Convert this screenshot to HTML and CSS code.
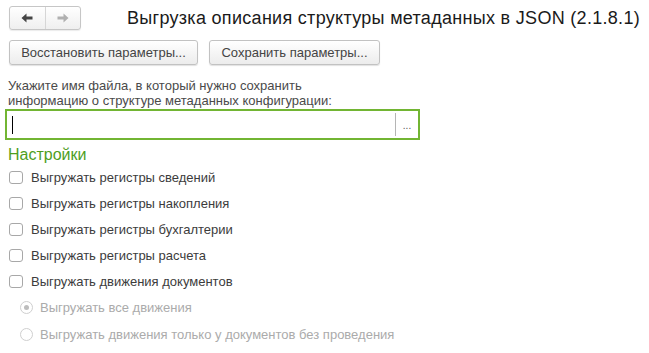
FILE: index.html
```html
<!DOCTYPE html>
<html lang="ru">
<head>
    <meta charset="UTF-8">
    <title>Выгрузка описания структуры метаданных в JSON</title>
    <link rel="stylesheet" href="styles.css">
</head>
<body>
    <div class="form">
        <div class="header">
            <div class="nav">
                <span class="nav-btn">
                    <svg width="12" height="10" viewBox="0 0 12 10"><path d="M0.5 5 L5.5 0.5 V3.5 H11.5 V6.5 H5.5 V9.5 Z" fill="#454545"/></svg>
                </span>
                <span class="nav-btn">
                    <svg width="12" height="10" viewBox="0 0 12 10"><path d="M11.5 5 L6.5 0.5 V3.5 H0.5 V6.5 H6.5 V9.5 Z" fill="#b0b0b0"/></svg>
                </span>
            </div>
            <h1 class="title">Выгрузка описания структуры метаданных в JSON (2.1.8.1)</h1>
        </div>

        <div class="actions">
            <button class="btn btn-restore">Восстановить параметры...</button>
            <button class="btn btn-save">Сохранить параметры...</button>
        </div>

        <div class="file-label">Укажите имя файла, в который нужно сохранить<br>информацию о структуре метаданных конфигурации:</div>
        <div class="file-field">
            <span class="file-input"><span class="caret"></span></span>
            <span class="file-choose">...</span>
        </div>

        <div class="group-title">Настройки</div>
        <div class="options">
            <label class="check"><span class="box"></span>Выгружать регистры сведений</label>
            <label class="check"><span class="box"></span>Выгружать регистры накопления</label>
            <label class="check"><span class="box"></span>Выгружать регистры бухгалтерии</label>
            <label class="check"><span class="box"></span>Выгружать регистры расчета</label>
            <label class="check"><span class="box"></span>Выгружать движения документов</label>
            <label class="radio disabled"><span class="dot checked"></span>Выгружать все движения</label>
            <label class="radio disabled"><span class="dot"></span>Выгружать движения только у документов без проведения</label>
        </div>
    </div>
</body>
</html>
```

FILE: styles.css
```css
body {
    margin: 0;
    background-color: #ffffff;
    color: #333333;
    font-family: 'Liberation Sans', Arial, sans-serif;
    font-size: 13px;
}

.form {
    padding-top: 6px;
}

.header {
    display: flex;
    align-items: center;
    height: 24px;
}

.nav {
    display: flex;
    margin-left: 9px;
    width: 72px;
    height: 24px;
    box-sizing: border-box;
    border: 1px solid #c6c6c6;
    border-radius: 3px;
    background: linear-gradient(#ffffff, #efefef);
    box-shadow: 0 1px 1px rgba(0, 0, 0, 0.08);
}

.nav-btn {
    flex: 1;
    display: flex;
    align-items: center;
    justify-content: center;
}

.nav-btn + .nav-btn {
    border-left: 1px solid #d6d6d6;
}

.title {
    margin: 1px 0 0 46px;
    font-size: 18px;
    font-weight: normal;
    letter-spacing: 0.3px;
    color: #1a1a1a;
    white-space: nowrap;
}

.actions {
    display: flex;
    gap: 11px;
    margin: 10px 0 0 9px;
}

.btn {
    height: 25px;
    box-sizing: border-box;
    border: 1px solid #c2c2c2;
    border-radius: 3px;
    background: linear-gradient(#ffffff, #ececec);
    box-shadow: 0 1px 1px rgba(0, 0, 0, 0.12);
    font-family: inherit;
    font-size: 13px;
    color: #444444;
    padding: 0;
}

.btn-restore {
    width: 189px;
}

.btn-save {
    width: 171px;
}

.file-label {
    margin: 13px 0 0 8px;
    line-height: 15px;
    color: #4a4a4a;
}

.file-field {
    display: flex;
    align-items: center;
    margin: 1px 0 0 5px;
    width: 415px;
    height: 31px;
    box-sizing: border-box;
    border: 2px solid #72b533;
    background: #ffffff;
}

.file-input {
    flex: 1;
    display: flex;
    align-items: center;
    height: 100%;
    padding-left: 5px;
}

.caret {
    width: 1px;
    height: 18px;
    background: #000000;
}

.file-choose {
    width: 22px;
    height: 23px;
    border-left: 1px solid #b5b5b5;
    font-size: 10px;
    color: #555555;
    text-align: center;
    line-height: 26px;
}

.group-title {
    margin: 6px 0 0 8px;
    font-size: 16px;
    line-height: 18px;
    color: #4e9e1e;
}

.options {
    display: flex;
    flex-direction: column;
}

.check,
.radio {
    display: flex;
    align-items: center;
    height: 26px;
    color: #3c3c3c;
}

.check {
    padding-left: 9px;
}

.radio {
    padding-left: 20px;
    height: 27px;
}

.box {
    width: 14px;
    height: 13px;
    box-sizing: border-box;
    border: 1px solid #a8a8a8;
    border-radius: 3px;
    background: #ffffff;
    margin-right: 8px;
}

.dot {
    position: relative;
    width: 13px;
    height: 13px;
    box-sizing: border-box;
    border: 1px solid #cfcfcf;
    border-radius: 50%;
    margin-right: 7px;
}

.dot.checked::after {
    content: "";
    position: absolute;
    left: 3px;
    top: 3px;
    width: 5px;
    height: 5px;
    border-radius: 50%;
    background: #bdbdbd;
}

.radio.disabled {
    color: #ababab;
}
```
